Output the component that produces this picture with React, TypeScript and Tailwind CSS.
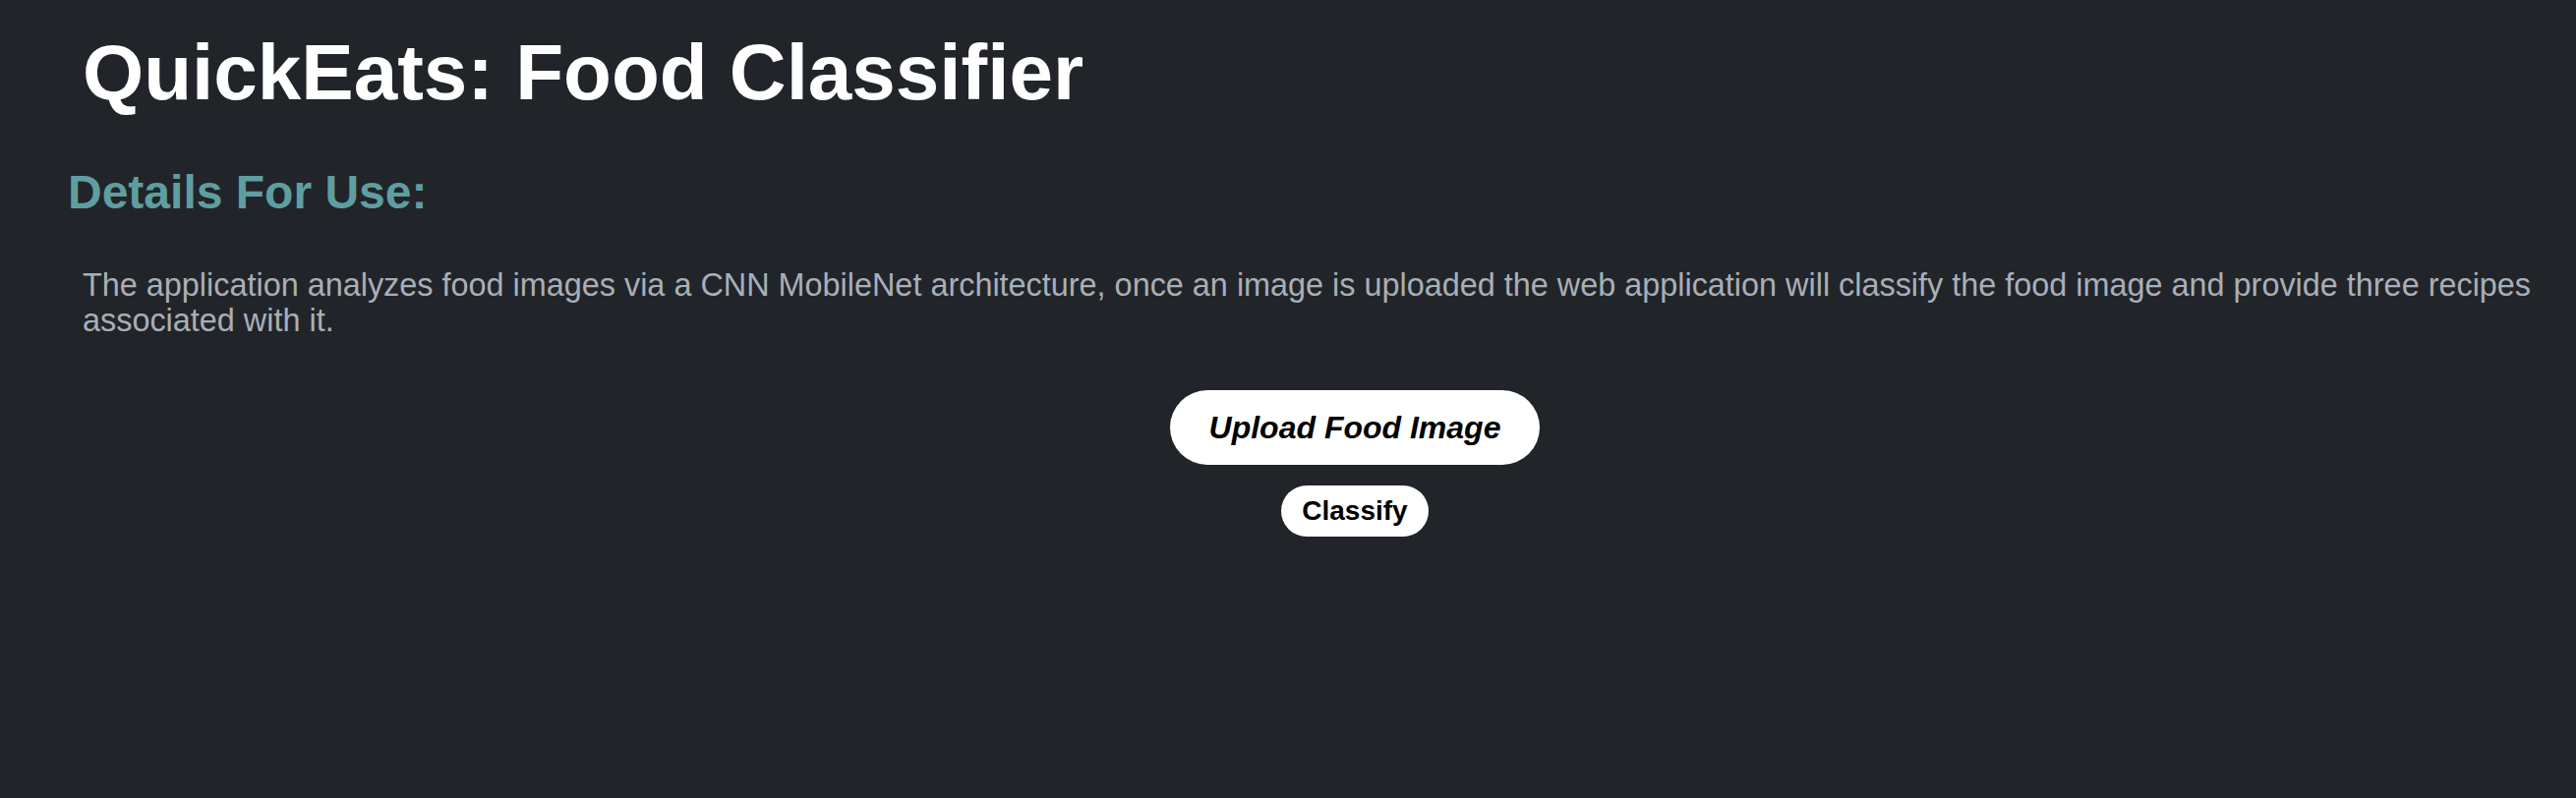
import React from "react";

export default function App() {
  return (
    <div className="min-h-screen w-full bg-[#212529] font-['Liberation_Sans',Arial,Helvetica,sans-serif]">
      <h1 className="pl-[84px] pt-[34px] text-[80px] font-bold leading-none text-white">
        QuickEats: Food Classifier
      </h1>
      <h2 className="mt-[58px] pl-[69px] text-[48px] font-bold leading-none text-[#5f9ea0]">
        Details For Use:
      </h2>
      <p className="mt-[52px] pl-[84px] pr-[40px] text-[32.4px] leading-[36px] text-[#a9afb7]">
        The application analyzes food images via a CNN MobileNet architecture, once an image is uploaded the web
        application will classify the food image and provide three recipes associated with it.
      </p>
      <div className="mt-[53px] flex flex-col items-center pl-[136px]">
        <button className="rounded-full bg-white px-[40px] py-[22px] text-[32px] font-bold italic leading-none text-black">
          Upload Food Image
        </button>
        <button className="mt-[21px] rounded-full bg-white px-[21px] py-[12px] text-[28px] font-bold leading-none text-black">
          Classify
        </button>
      </div>
    </div>
  );
}
